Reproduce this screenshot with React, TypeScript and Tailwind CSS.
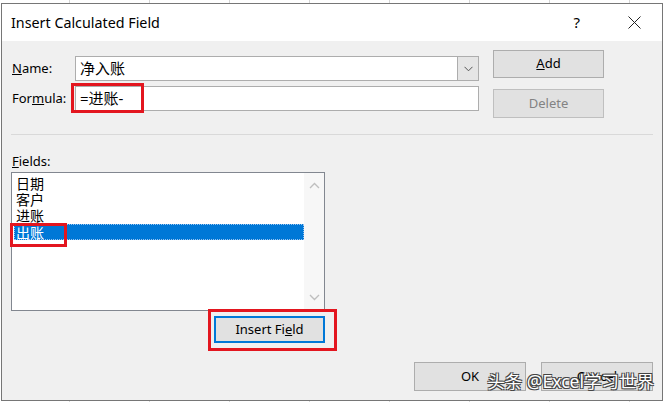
const ui = "font-['Segoe_UI','Noto_Sans','Noto_Sans_CJK_SC',sans-serif]";

function Btn({ children, className = "" }: { children: React.ReactNode; className?: string }) {
  return <div className={`flex items-center justify-center bg-[#e1e1e1] text-[13px] ${className}`}>{children}</div>;
}

function Chevron({ up }: { up?: boolean }) {
  return (
    <svg width="11" height="7" viewBox="0 0 11 7" className="block">
      <path d={up ? "M1 6 L5.5 1.5 L10 6" : "M1 1 L5.5 5.5 L10 1"} fill="none" stroke="#bfbfbf" strokeWidth="1.4" />
    </svg>
  );
}

export default function App() {
  const fields = ["日期", "客户", "进账", "出账"];
  return (
    <div
      className={`relative h-[402px] w-[665px] overflow-hidden bg-white bg-[linear-gradient(90deg,#d6d6d6_1px,transparent_1px)] bg-[length:80px_100%] bg-[position:69px_0] pl-[1px] pt-[3px] ${ui}`}
    >
      <div className="flex h-[398px] w-[662px] flex-col border border-[#767676] bg-[#f0f0f0]">
        {/* title bar */}
        <div className="flex h-[37px] items-center bg-white pl-[9px] text-[14px] text-black">
          <span className="text-[14.3px]">Insert Calculated Field</span>
          <span className="ml-auto mr-[48px] text-[15px]">?</span>
          <svg width="13" height="13" viewBox="0 0 13 13" className="mr-[21px]">
            <path d="M0.5 0.5 L12.5 12.5 M12.5 0.5 L0.5 12.5" stroke="#222" strokeWidth="1" />
          </svg>
        </div>

        <div className="relative flex flex-1 flex-col">
          {/* name / formula + add / delete */}
          <div className="flex pl-[10px] pt-[9px]">
            <div className="mt-[6px] flex flex-col gap-[5px]">
              <div className="flex h-[25px] items-center">
                <span className="w-[63px] text-[13px]"><u>N</u>ame:</span>
                <div className="flex h-[25px] w-[404px] border border-[#adadad] bg-white">
                  <span className="flex-1 pl-[4px] text-[15px] leading-[23px]">净入账</span>
                  <div className="flex w-[21px] items-center justify-center border-l border-[#adadad] bg-[#e5e5e5]">
                    <svg width="9" height="6" viewBox="0 0 9 6">
                      <path d="M0.5 0.8 L4.5 4.8 L8.5 0.8" fill="none" stroke="#555" strokeWidth="1" />
                    </svg>
                  </div>
                </div>
              </div>
              <div className="flex h-[25px] items-center">
                <span className="w-[63px] text-[13px]">For<u>m</u>ula:</span>
                <div className="relative h-[25px] w-[404px] border border-[#adadad] bg-white pl-[4px] text-[15px] leading-[23px]">
                  =进账-
                  <div className="absolute left-[-5px] top-[-4px] h-[30px] w-[73px] border-[3px] border-[#e3161f]" />
                </div>
              </div>
            </div>
            <div className="ml-[14px] flex flex-col gap-[11px]">
              <Btn className="h-[28px] w-[111px] border border-[#adadad] text-black"><span><u>A</u>dd</span></Btn>
              <Btn className="h-[29px] w-[111px] border border-[#bfbfbf] text-[#838383]">Delete</Btn>
            </div>
          </div>

          <div className="ml-[9px] mt-[16px] h-px w-[642px] bg-[#d9d9d9]" />

          {/* fields */}
          <div className="ml-[10px] mt-[18px] h-[16px] text-[13px] leading-[16px]"><u>F</u>ields:</div>
          <div className="relative ml-[9px] mt-[3px] flex h-[139px] w-[314px] border border-[#828790] bg-white">
            <div className="flex flex-1 flex-col pl-[2px] pt-[3px]">
              {fields.map((f, i) => (
                <div
                  key={f}
                  className={`h-[16px] text-[14px] leading-[16px] ${
                    i === 3 ? "border border-dotted border-[#9ac4f0] bg-[#0078d7] pl-[1px] text-white" : "pl-[2px] text-black"
                  }`}
                >
                  {f}
                </div>
              ))}
            </div>
            <div className="flex w-[20px] flex-col items-center justify-between bg-[#f7f7f7] py-[9px]">
              <Chevron up />
              <Chevron />
            </div>
            <div className="absolute left-[-2px] top-[50px] h-[24px] w-[57px] border-[3px] border-[#e3161f]" />
          </div>

          <div className="flex w-[325px] justify-end pr-[2px] pt-[5px]">
            <div className="relative">
              <Btn className="h-[27px] w-[111px] border-2 border-[#0078d7] text-black">
                <span>Insert Fi<u>e</u>ld</span>
              </Btn>
              <div className="absolute left-[-6px] top-[-7px] h-[42px] w-[129px] border-[3px] border-[#e3161f]" />
            </div>
          </div>

          {/* ok / cancel */}
          <div className="mt-auto flex justify-end gap-[15px] pb-[9px] pr-[9px]">
            <Btn className="h-[29px] w-[112px] border border-[#adadad] text-black">OK</Btn>
            <Btn className="h-[29px] w-[112px] border border-[#adadad] text-black">Cancel</Btn>
          </div>
          <div className="absolute bottom-[6px] right-[8px] text-[17.5px] text-white [text-shadow:1px_1px_0_#444,-1px_-1px_0_#444,1px_-1px_0_#444,-1px_1px_0_#444]">
            头条 @Excel学习世界
          </div>
        </div>
      </div>
    </div>
  );
}
